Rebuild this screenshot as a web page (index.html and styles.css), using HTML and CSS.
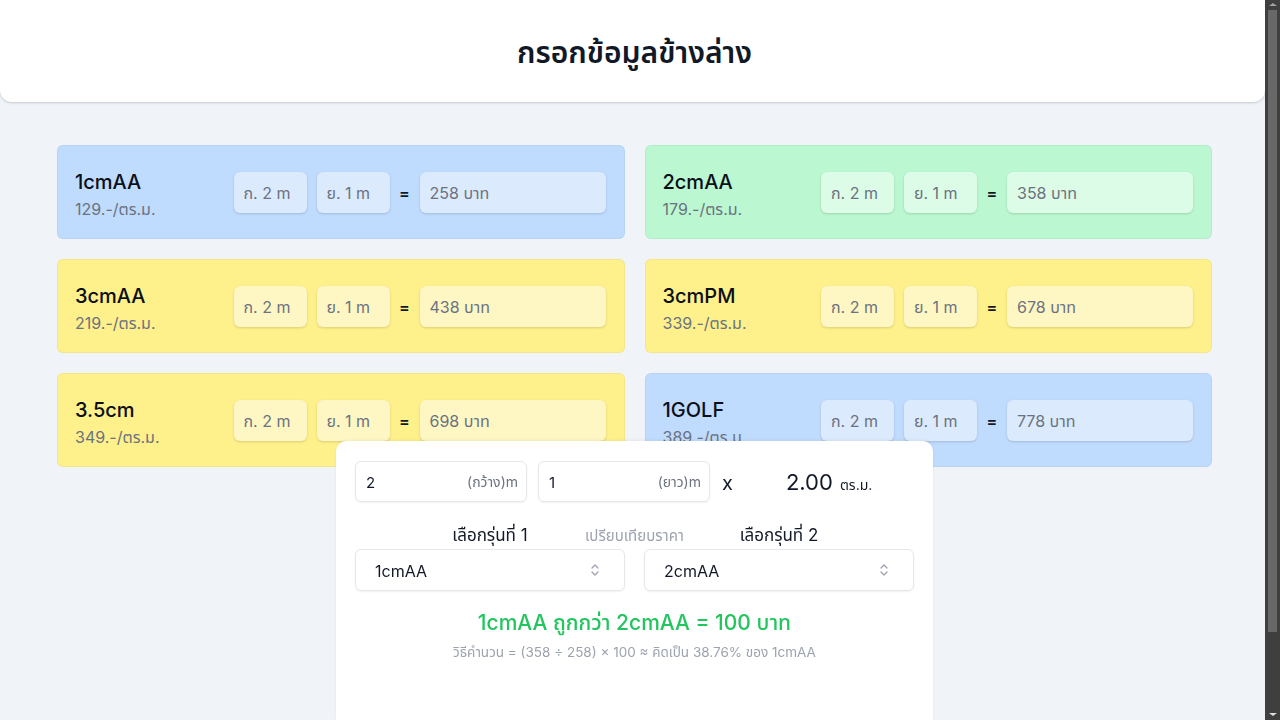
FILE: index.html
```html
<!DOCTYPE html>
<html lang="th">
<head>
<meta charset="utf-8">
<title>กรอกข้อมูลข้างล่าง</title>
<link rel="stylesheet" href="styles.css">
</head>
<body>
<div class="page">
<header class="top">
  <h1 class="title">กรอกข้อมูลข้างล่าง</h1>
</header>
<main class="grid">
  <div class="card blue">
    <div class="info"><div class="name">1cmAA</div><div class="price">129.-/ตร.ม.</div></div>
    <div class="box w">ก. 2 m</div><div class="box l">ย. 1 m</div><span class="eq">=</span><div class="box total">258 บาท</div>
  </div>
  <div class="card green">
    <div class="info"><div class="name">2cmAA</div><div class="price">179.-/ตร.ม.</div></div>
    <div class="box w">ก. 2 m</div><div class="box l">ย. 1 m</div><span class="eq">=</span><div class="box total">358 บาท</div>
  </div>
  <div class="card yellow">
    <div class="info"><div class="name">3cmAA</div><div class="price">219.-/ตร.ม.</div></div>
    <div class="box w">ก. 2 m</div><div class="box l">ย. 1 m</div><span class="eq">=</span><div class="box total">438 บาท</div>
  </div>
  <div class="card yellow">
    <div class="info"><div class="name">3cmPM</div><div class="price">339.-/ตร.ม.</div></div>
    <div class="box w">ก. 2 m</div><div class="box l">ย. 1 m</div><span class="eq">=</span><div class="box total">678 บาท</div>
  </div>
  <div class="card yellow">
    <div class="info"><div class="name">3.5cm</div><div class="price">349.-/ตร.ม.</div></div>
    <div class="box w">ก. 2 m</div><div class="box l">ย. 1 m</div><span class="eq">=</span><div class="box total">698 บาท</div>
  </div>
  <div class="card blue">
    <div class="info"><div class="name">1GOLF</div><div class="price">389.-/ตร.ม.</div></div>
    <div class="box w">ก. 2 m</div><div class="box l">ย. 1 m</div><span class="eq">=</span><div class="box total">778 บาท</div>
  </div>
</main>
</div>
<section class="panel">
  <div class="dims">
    <div class="field"><span class="val">2</span><span class="unit">(กว้าง)m</span></div>
    <div class="field"><span class="val">1</span><span class="unit">(ยาว)m</span></div>
    <span class="times">x</span>
    <div class="area"><span class="num">2.00</span><span class="sq">ตร.ม.</span></div>
  </div>
  <div class="labels">
    <span class="lab first">เลือกรุ่นที่ 1</span>
    <span class="mid">เปรียบเทียบราคา</span>
    <span class="lab second">เลือกรุ่นที่ 2</span>
  </div>
  <div class="selects">
    <div class="select"><span>1cmAA</span>
      <svg class="chev" width="10" height="14" viewBox="0 0 10 14"><path d="M2 5 L5 2 L8 5 M2 9 L5 12 L8 9" fill="none" stroke="#9ca3af" stroke-width="1.3" stroke-linecap="round" stroke-linejoin="round"/></svg>
    </div>
    <div class="select"><span>2cmAA</span>
      <svg class="chev" width="10" height="14" viewBox="0 0 10 14"><path d="M2 5 L5 2 L8 5 M2 9 L5 12 L8 9" fill="none" stroke="#9ca3af" stroke-width="1.3" stroke-linecap="round" stroke-linejoin="round"/></svg>
    </div>
  </div>
  <p class="result">1cmAA ถูกกว่า 2cmAA = 100 บาท</p>
  <p class="how">วิธีคำนวน = (358 ÷ 258) × 100 ≈ คิดเป็น 38.76% ของ 1cmAA</p>
</section>
<div class="scrollbar"><div class="arrow up"></div><div class="thumb"></div><div class="arrow down"></div></div>
</body>
</html>
```
FILE: styles.css
```css
html, body {
  margin: 0;
  padding: 0;
}
body {
  background: #f0f3f8;
  font-family: "Inter", "Noto Sans Thai", "Noto Sans Thai UI", "Noto Sans", sans-serif;
  color: #111827;
  min-height: 822px;
}
.page {
  margin-right: 15px;
}
.top {
  background: #ffffff;
  height: 102px;
  box-sizing: border-box;
  padding-top: 6px;
  border-radius: 0 0 12px 12px;
  box-shadow: 0 1px 3px rgba(0,0,0,0.12), 0 1px 2px rgba(0,0,0,0.06);
  display: flex;
  align-items: center;
  justify-content: center;
}
.title {
  margin: 0;
  font-size: 30px;
  font-weight: 600;
  color: #111827;
  padding-left: 4px;
}
.grid {
  display: grid;
  grid-template-columns: 1fr 1fr;
  gap: 20px;
  padding: 43px 53px 0 57px;
}
.card {
  height: 94px;
  box-sizing: border-box;
  border-radius: 6px;
  border: 1px solid rgba(0,0,0,0.04);
  display: flex;
  align-items: center;
  padding: 0 18px 0 17px;
}
.blue { background: #bfdbfe; }
.green { background: #bbf7d0; }
.yellow { background: #fef08a; }
.info {
  flex: 1;
  display: flex;
  flex-direction: column;
  padding-top: 4px;
}
.name {
  font-size: 20px;
  font-weight: 500;
  color: #0b0f19;
  line-height: 26px;
}
.price {
  font-size: 16px;
  color: #6b7280;
  line-height: 22px;
  margin-top: 3px;
}
.box {
  height: 41px;
  box-sizing: border-box;
  border-radius: 6px;
  display: flex;
  align-items: center;
  padding: 3px 10px 0 10px;
  font-size: 16px;
  color: #6b7280;
  box-shadow: 0 1px 3px rgba(0,0,0,0.1), 0 1px 2px rgba(0,0,0,0.05);
}
.box.w { width: 73px; margin-right: 10px; }
.box.l { width: 73px; }
.box.total { width: 186px; }
.blue .box { background: #dceafd; }
.green .box { background: #dcfce7; }
.yellow .box { background: #fef7c3; }
.eq {
  width: 30px;
  text-align: center;
  font-size: 16px;
  font-weight: 600;
  color: #111827;
  padding-top: 2px;
}
.panel {
  position: fixed;
  bottom: 0;
  left: 336px;
  width: 597px;
  height: 279px;
  box-sizing: border-box;
  background: #ffffff;
  border-radius: 10px 10px 0 0;
  box-shadow: 0 -1px 3px rgba(0,0,0,0.06);
  padding: 20px 19px 0 19px;
}
.dims {
  display: flex;
  align-items: center;
  height: 41px;
}
.field {
  width: 172px;
  height: 41px;
  box-sizing: border-box;
  border: 1px solid #e5e7eb;
  border-radius: 6px;
  box-shadow: 0 1px 2px rgba(0,0,0,0.06);
  display: flex;
  align-items: center;
  justify-content: space-between;
  padding: 1px 8px 0 10px;
  font-size: 15px;
  margin-right: 11px;
}
.field .val { color: #111827; }
.field .unit { color: #6b7280; font-size: 14px; }
.times {
  font-size: 20px;
  color: #111827;
  margin-left: 1px;
  padding-top: 3px;
}
.area {
  margin-left: 53px;
  display: flex;
  align-items: baseline;
  padding-top: 2px;
}
.area .num {
  font-size: 22px;
  color: #111827;
}
.area .sq {
  font-size: 14px;
  color: #111827;
  margin-left: 7px;
}
.labels {
  display: grid;
  grid-template-columns: 1fr 1fr;
  column-gap: 19px;
  align-items: center;
  margin-top: 20px;
  height: 24px;
}
.lab {
  grid-row: 1;
  font-size: 17px;
  color: #111827;
  text-align: center;
  padding-top: 1px;
}
.lab.first { grid-column: 1; }
.lab.second { grid-column: 2; }
.mid {
  grid-row: 1;
  grid-column: 1 / -1;
  justify-self: center;
  font-size: 15px;
  color: #9ca3af;
  padding-top: 1px;
}
.selects {
  display: grid;
  grid-template-columns: 1fr 1fr;
  gap: 19px;
  margin-top: 3px;
}
.select {
  height: 42px;
  box-sizing: border-box;
  border: 1px solid #e5e7eb;
  border-radius: 6px;
  box-shadow: 0 1px 2px rgba(0,0,0,0.06);
  display: flex;
  align-items: center;
  justify-content: space-between;
  padding: 2px 24px 0 19px;
  font-size: 16px;
  color: #111827;
}
.select .chev { margin-top: -2px; }
.result {
  margin: 18px 0 0 0;
  text-align: center;
  font-size: 21px;
  font-weight: 500;
  color: #22c55e;
  line-height: 28px;
}
.how {
  margin: 6px 0 0 0;
  text-align: center;
  font-size: 13.5px;
  color: #9ca3af;
  line-height: 18px;
}
.scrollbar {
  position: fixed;
  top: 0;
  right: 0;
  width: 15px;
  height: 100%;
  background: #3f3f3f;
  display: flex;
  flex-direction: column;
  align-items: center;
}
.scrollbar .thumb {
  width: 9px;
  height: 622px;
  background: #686868;
  margin-top: 1px;
}
.scrollbar .arrow {
  width: 0;
  height: 0;
  border-left: 4px solid transparent;
  border-right: 4px solid transparent;
}
.scrollbar .arrow.up {
  border-bottom: 3px solid #a3a3a3;
  margin-top: 3px;
  margin-bottom: 3px;
}
.scrollbar .arrow.down {
  border-top: 3px solid #e0e0e0;
  margin-top: auto;
  margin-bottom: 4px;
}
```
